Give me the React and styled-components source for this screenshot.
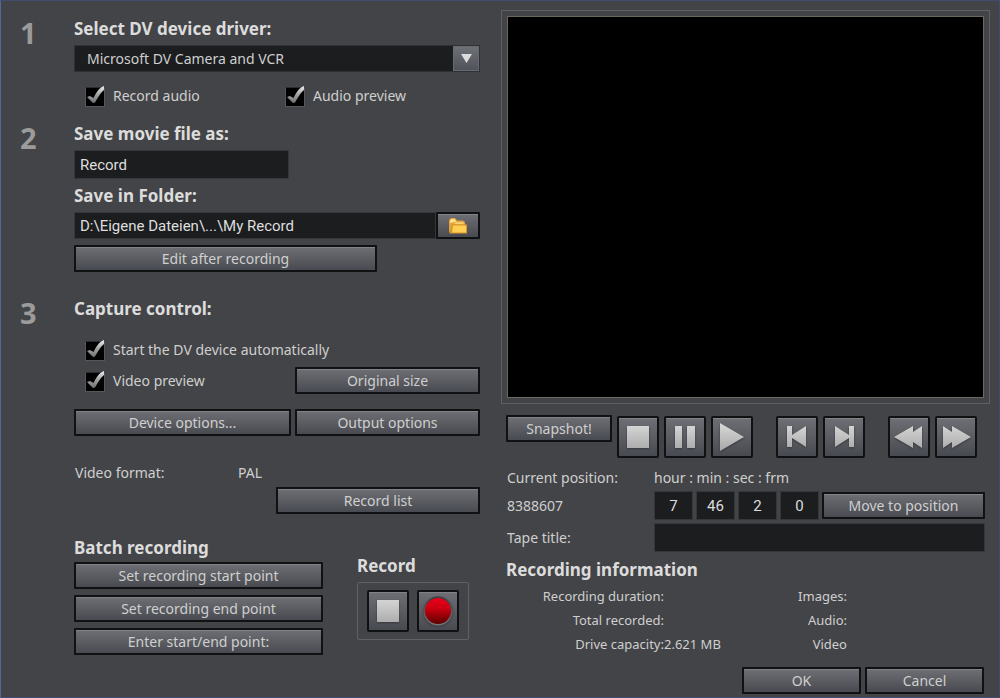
import React, { useState } from 'react'
import styled, { createGlobalStyle } from 'styled-components'

function Check({ label, defaultChecked = true }) {
    return (
        <CheckLabel>
            <CheckBox>
                <input type="checkbox" defaultChecked={defaultChecked} />
                <svg viewBox="0 0 20 22" width="20" height="22" aria-hidden="true">
                    <defs>
                        <linearGradient id="tick" x1="0" y1="1" x2="0" y2="0">
                            <stop offset="0" stopColor="#6f7072" />
                            <stop offset="0.5" stopColor="#a3a3a4" />
                            <stop offset="1" stopColor="#f0f0f0" />
                        </linearGradient>
                    </defs>
                    <path d="M2 12 L5 11 L8.5 13 C10.5 8.5 13.5 4.5 16 2.5 L19 1 L19 5 C15 8.5 12.5 13 10 17.5 L8 18 Z" fill="url(#tick)" />
                </svg>
            </CheckBox>
            {label}
        </CheckLabel>
    )
}

// pale transport symbols share one gradient
function Symbol({ children, size = 30 }) {
    return (
        <svg viewBox="0 0 30 30" width={size} height={size} fill="url(#pale)" aria-hidden="true">
            <defs>
                <linearGradient id="pale" gradientUnits="userSpaceOnUse" x1="0" y1="3" x2="0" y2="27">
                    <stop offset="0" stopColor="#d6d6d6" />
                    <stop offset="1" stopColor="#ababab" />
                </linearGradient>
            </defs>
            {children}
        </svg>
    )
}

const transport = [
    [
        { name: 'Stop', shape: <path d="M4 4H26V26H4Z" /> },
        { name: 'Pause', shape: <path d="M5 4H12V26H5Z M17 4H25V26H17Z" /> },
        { name: 'Play', shape: <path d="M3 1L27 15L3 29Z" /> },
    ],
    [
        { name: 'Previous frame', shape: <path d="M5 4H10V13L24 4V25L10 16V25H5Z" /> },
        { name: 'Next frame', shape: <path d="M25 4H20V13L6 4V25L20 16V25H25Z" /> },
    ],
    [
        { name: 'Rewind', shape: <path d="M0 15L19 4V10L28 4V26L19 20V26Z" /> },
        { name: 'Fast forward', shape: <path d="M30 15L11 4V10L2 4V26L11 20V26Z" /> },
    ],
]

function App() {

    const [ time, setTime ] = useState({ hour: '7', min: '46', sec: '2', frm: '0' });

    return (
        <Dialog>
            <GlobalStyle />
            <Settings>
                <Step>
                    <Number>1</Number>
                    <div>
                        <Heading as="label" htmlFor="driver">Select DV device driver:</Heading>
                        <SelectBox>
                            <select id="driver">
                                <option>Microsoft DV Camera and VCR</option>
                            </select>
                            <Arrow>
                                <svg viewBox="0 0 11 9" width="11" height="9" aria-hidden="true">
                                    <path d="M0 0H11L5.5 9Z" fill="#dcdcdc" />
                                </svg>
                            </Arrow>
                        </SelectBox>
                        <AudioChecks>
                            <Check label="Record audio" />
                            <Check label="Audio preview" />
                        </AudioChecks>
                    </div>
                </Step>

                <Step $top={16}>
                    <Number>2</Number>
                    <div>
                        <Heading as="label" htmlFor="movie">Save movie file as:</Heading>
                        <NameField id="movie" type="text" defaultValue="Record" />
                        <Heading as="label" htmlFor="folder">Save in Folder:</Heading>
                        <FolderRow>
                            <Field id="folder" type="text" defaultValue="D:\Eigene Dateien\...\My Record" />
                            <FolderButton aria-label="Choose folder">
                                <svg viewBox="0 0 20 18" width="20" height="18" aria-hidden="true">
                                    <path d="M1 16V3L3 1H7L9 3.5H15L17 5V8H6Z" fill="#e3a33a" />
                                    <path d="M2 4L3.5 2H6.5L8.5 4.5L2 6Z" fill="#ffe28c" />
                                    <path d="M8 5H15L16 7H6Z" fill="#f6cf6d" />
                                    <path d="M4 7.5H19V16.5H1.5Z" fill="#d9952a" />
                                    <path d="M5 8.5H18V15.5H4Z" fill="#ffcf53" />
                                </svg>
                            </FolderButton>
                        </FolderRow>
                        <EditButton>Edit after recording</EditButton>
                    </div>
                </Step>

                <Step $top={25}>
                    <Number>3</Number>
                    <div>
                        <Heading>Capture control:</Heading>
                        <StartCheck>
                            <Check label="Start the DV device automatically" />
                        </StartCheck>
                        <PreviewRow>
                            <Check label="Video preview" />
                            <Button>Original size</Button>
                        </PreviewRow>
                        <OptionsRow>
                            <Button>Device options...</Button>
                            <Button>Output options</Button>
                        </OptionsRow>
                        <Format>
                            <span>Video format:</span>
                            <span>PAL</span>
                        </Format>
                        <RecordList>Record list</RecordList>
                        <Recording>
                            <Batch>
                                <Heading>Batch recording</Heading>
                                <Button>Set recording start point</Button>
                                <Button>Set recording end point</Button>
                                <Button>Enter start/end point:</Button>
                            </Batch>
                            <RecordPanel>
                                <Heading>Record</Heading>
                                <RecordFrame>
                                    <SquareButton aria-label="Stop recording">
                                        <Symbol>{transport[0][0].shape}</Symbol>
                                    </SquareButton>
                                    <SquareButton aria-label="Record">
                                        <svg viewBox="0 0 30 30" width="30" height="30" aria-hidden="true">
                                            <defs>
                                                <linearGradient id="red" x1="0" y1="0" x2="0" y2="1">
                                                    <stop offset="0" stopColor="#e8001c" />
                                                    <stop offset="0.4" stopColor="#cc0010" />
                                                    <stop offset="1" stopColor="#5c0000" />
                                                </linearGradient>
                                                <linearGradient id="rim" x1="0" y1="0" x2="0" y2="1">
                                                    <stop offset="0" stopColor="#3a3c40" />
                                                    <stop offset="1" stopColor="#74767b" />
                                                </linearGradient>
                                            </defs>
                                            <circle cx="15" cy="15" r="14.5" fill="url(#rim)" />
                                            <circle cx="15" cy="15" r="13" fill="url(#red)" />
                                        </svg>
                                    </SquareButton>
                                </RecordFrame>
                            </RecordPanel>
                        </Recording>
                    </div>
                </Step>
            </Settings>

            <Monitor>
                <Screen><div /></Screen>
                <Transport>
                    <Snapshot>Snapshot!</Snapshot>
                    {transport.map((group, i) => (
                        <ButtonGroup key={i}>
                            {group.map(({ name, shape }) => (
                                <SquareButton key={name} aria-label={name}>
                                    <Symbol>{shape}</Symbol>
                                </SquareButton>
                            ))}
                        </ButtonGroup>
                    ))}
                </Transport>

                <Position>
                    <span>Current position:</span>
                    <span>hour : min : sec : frm</span>
                    <span>8388607</span>
                    <TimeRow>
                        {Object.keys(time).map((unit) => (
                            <TimeField
                                key={unit}
                                type="text"
                                aria-label={unit}
                                value={time[unit]}
                                onChange={(e) => setTime({ ...time, [unit]: e.target.value })}
                            />
                        ))}
                        <Button>Move to position</Button>
                    </TimeRow>
                    <label htmlFor="tape">Tape title:</label>
                    <TapeField id="tape" type="text" />
                </Position>

                <InfoHeading>Recording information</InfoHeading>
                <Info>
                    <dt>Recording duration:</dt><dd></dd>
                    <dt>Images:</dt><dd></dd>
                    <dt>Total recorded:</dt><dd></dd>
                    <dt>Audio:</dt><dd></dd>
                    <dt>Drive capacity:</dt><dd>2.621 MB</dd>
                    <dt>Video</dt><dd></dd>
                </Info>

                <Footer>
                    <Button>OK</Button>
                    <Button>Cancel</Button>
                </Footer>
            </Monitor>
        </Dialog>
    )
}

export default App

const GlobalStyle = createGlobalStyle`
    * {
        box-sizing: border-box;
    }

    body {
        margin: 0;
        background: #434447;
    }

    button, input, select {
        font: inherit;
        color: inherit;
    }
`

const Dialog = styled.main`
    min-height: 100vh;
    display: grid;
    grid-template-columns: minmax(0, 460fr) minmax(0, 489fr);
    column-gap: 21px;
    padding: 0 9px 0 19px;
    border: 1px solid #3f4c6d;
    border-left-color: #4f6a98;
    background: #434447;
    color: #cfcfcf;
    font-family: "Noto Sans", "Open Sans", sans-serif;
    font-size: 14px;
    line-height: 20px;
`

const Settings = styled.section`
    padding-top: 16px;
`

const Step = styled.section`
    display: grid;
    grid-template-columns: 54px minmax(0, 1fr);
    margin-top: ${(props) => props.$top || 0}px;
`

const Number = styled.div`
    color: #9b9b9b;
    font-size: 29px;
    font-weight: 700;
    line-height: 32px;
`

const Heading = styled.h2`
    display: block;
    margin: 0 0 4px;
    color: #dcdcdc;
    font-size: 17px;
    font-weight: 700;
    line-height: 24px;
`

const Button = styled.button`
    height: 27px;
    padding: 0 8px;
    border: 2px solid #101113;
    border-radius: 1px;
    background: linear-gradient(#6d6f74, #5b5d62 50%, #484a51);
    box-shadow: inset 0 1px #808287;
    color: #cfcfcf;
    line-height: 20px;
    white-space: nowrap;

    &:hover {
        filter: brightness(1.1);
    }
`

const SquareButton = styled(Button)`
    display: flex;
    flex: none;
    align-items: center;
    justify-content: center;
    width: 42px;
    height: 42px;
    padding: 0;
    border-radius: 2px;

    svg {
        filter: drop-shadow(0 1px 1px #36383c);
    }
`

const Field = styled.input`
    min-width: 0;
    height: 29px;
    padding: 0 5px;
    border: 1px solid #36373a;
    background: #1c1d1f;
    color: #dedede;
    font-family: Roboto, "Liberation Sans", sans-serif;
    font-size: 15px;
`

const SelectBox = styled.div`
    display: grid;
    grid-template-columns: minmax(0, 1fr) 27px;
    height: 27px;

    select {
        grid-area: 1 / 1 / 2 / 3;
        appearance: none;
        padding: 0 32px 0 12px;
        border: 1px solid #303134;
        border-radius: 0;
        background: #1c1d1f;
    }
`

const Arrow = styled.span`
    grid-area: 1 / 2;
    z-index: 1;
    display: flex;
    align-items: center;
    justify-content: center;
    margin: 1px 1px 1px 0;
    border: 1px solid #666a6f;
    background: linear-gradient(#6d7075, #50535a);
    pointer-events: none;
`

const CheckLabel = styled.label`
    display: flex;
    align-items: center;
    gap: 8px;
    height: 20px;
    white-space: nowrap;
`

const CheckBox = styled.span`
    display: grid;
    align-items: end;

    input {
        grid-area: 1 / 1;
        appearance: none;
        width: 20px;
        height: 20px;
        margin: 0;
        border: 1px solid #56575a;
        border-top-color: #2c2d2f;
        background: #000;
    }

    svg {
        grid-area: 1 / 1;
        visibility: hidden;
        pointer-events: none;
    }

    input:checked + svg {
        visibility: visible;
    }
`

const AudioChecks = styled.div`
    display: grid;
    grid-template-columns: 200px 1fr;
    margin-top: 14px;
    padding-left: 11px;
`

const NameField = styled(Field)`
    display: block;
    width: 215px;
    margin-bottom: 5px;
`

const FolderRow = styled.div`
    display: flex;

    input {
        flex: 1;
        height: 27px;
    }
`

const FolderButton = styled(Button)`
    display: flex;
    align-items: center;
    justify-content: center;
    width: 44px;
`

const EditButton = styled(Button)`
    display: block;
    width: 303px;
    margin-top: 6px;
`

const StartCheck = styled.div`
    margin-top: 19px;
    padding-left: 11px;
`

const PreviewRow = styled.div`
    display: grid;
    grid-template-columns: minmax(0, 1fr) 185px;
    align-items: center;
    margin-top: 7px;
    padding-left: 11px;
`

const OptionsRow = styled.div`
    display: grid;
    grid-template-columns: minmax(0, 1fr) 185px;
    column-gap: 4px;
    margin-top: 15px;
`

const Format = styled.div`
    display: grid;
    grid-template-columns: 163px 1fr;
    margin: 27px 0 4px;
    padding-left: 1px;
`

const RecordList = styled(Button)`
    display: block;
    width: 204px;
    margin-left: auto;
`

const Recording = styled.div`
    display: flex;
    gap: 34px;
    margin-top: 22px;
`

const Batch = styled.div`
    display: flex;
    flex-direction: column;
    gap: 6px;
    width: 249px;

    ${Heading} {
        margin-bottom: -4px;
    }
`

const RecordPanel = styled.div`
    padding-top: 18px;
`

const RecordFrame = styled.div`
    display: flex;
    gap: 8px;
    padding: 7px 9px;
    border: 1px solid #606163;
    border-radius: 2px;
`

const Monitor = styled.section`
    display: flex;
    flex-direction: column;
    padding-top: 9px;
`

const Screen = styled.div`
    padding: 5px;
    border: 1px solid #5f6062;

    div {
        height: 382px;
        border: 1px solid #6b695f;
        background: #000;
    }
`

const Transport = styled.div`
    display: flex;
    gap: 23px;
    margin-top: 11px;
    padding-left: 5px;
`

const Snapshot = styled(Button)`
    width: 106px;
    margin-right: -18px;
`

const ButtonGroup = styled.div`
    display: flex;
    gap: 5px;
    padding-top: 1px;
`

const Position = styled.div`
    display: grid;
    grid-template-columns: 147px minmax(0, 1fr);
    align-items: center;
    row-gap: 3px;
    margin-top: 10px;
    padding: 0 5px 0 6px;
`

const TimeRow = styled.div`
    display: flex;
    align-items: center;
    gap: 3px;

    ${Button} {
        flex: 1;
    }
`

const TimeField = styled(Field)`
    width: 39px;
    text-align: center;
`

const TapeField = styled(Field)`
    width: 100%;
`

const InfoHeading = styled(Heading)`
    margin: 6px 0 2px;
    padding-left: 5px;
`

const Info = styled.dl`
    display: grid;
    grid-template-columns: 163px 91px 92px 1fr;
    margin: 0;
    font-size: 13px;
    line-height: 24px;

    dt {
        text-align: right;
    }

    dd {
        margin: 0;
    }
`

const Footer = styled.footer`
    display: flex;
    justify-content: flex-end;
    gap: 4px;
    margin-top: 11px;
    padding-right: 6px;

    ${Button} {
        width: 119px;
    }
`
